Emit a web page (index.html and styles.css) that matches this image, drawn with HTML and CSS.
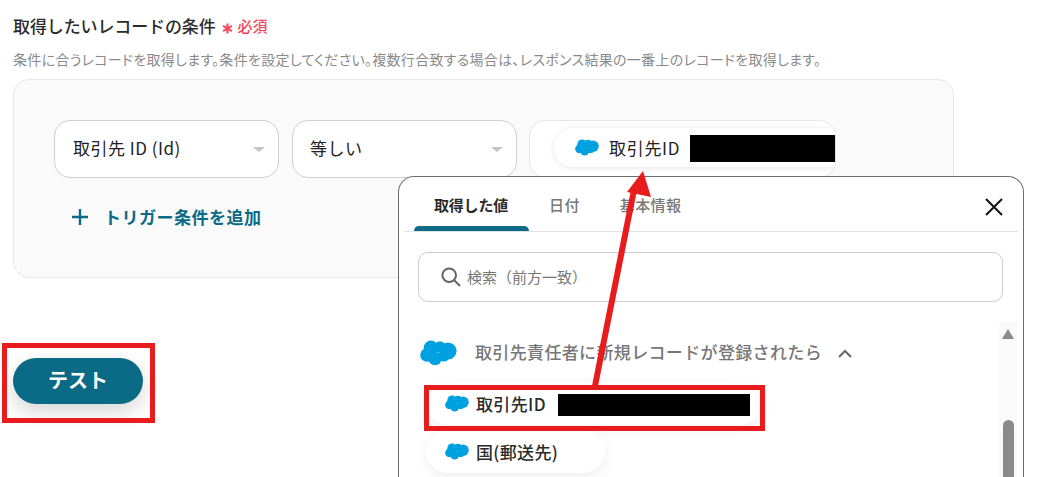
FILE: index.html
```html
<!DOCTYPE html>
<html lang="ja">
<head>
<meta charset="utf-8">
<title>取得したいレコードの条件</title>
<link rel="stylesheet" href="styles.css">
</head>
<body>
<svg class="defs" width="0" height="0" aria-hidden="true">
  <symbol id="cloud" viewBox="0 0 37 26">
    <g fill="#00a1e0">
      <circle cx="11" cy="8" r="7.4"/>
      <circle cx="20" cy="7" r="5.8"/>
      <circle cx="28" cy="11" r="8.6"/>
      <circle cx="7" cy="15" r="6.8"/>
      <circle cx="15" cy="18.5" r="6.8"/>
      <circle cx="24" cy="16" r="5.6"/>
    </g>
  </symbol>
</svg>

<main class="page">
  <h1 class="title">取得したいレコードの条件<span class="required"><svg class="star" viewBox="0 0 12 12"><path d="M6 .5v11M1.200 3.200l9.600 5.600M10.800 3.200l-9.600 5.600" stroke="#f4485f" stroke-width="2.300" fill="none"/></svg>必須</span></h1>
  <p class="desc">条件に合うレコードを取得します。条件を設定してください。複数行合致する場合は、レスポンス結果の一番上のレコードを取得します。</p>

  <section class="panel">
    <div class="row">
      <div class="select"><span class="select-text">取引先 ID (Id)</span><i class="caret"></i></div>
      <div class="select"><span class="select-text">等しい</span><i class="caret"></i></div>
      <div class="value">
        <div class="pill">
          <svg class="cloud-sm"><use href="#cloud"/></svg>
          <span class="pill-text">取引先ID</span>
          <span class="redact redact-a"></span>
        </div>
      </div>
    </div>
    <div class="add">
      <svg class="plus" viewBox="0 0 16 16"><path d="M8 0v16M0 8h16" stroke="#0b6a85" stroke-width="2.400" fill="none"/></svg>
      <span>トリガー条件を追加</span>
    </div>
  </section>

  <button class="test" type="button">テスト</button>
</main>

<aside class="popover">
  <nav class="tabs">
    <span class="tab active">取得した値</span>
    <span class="tab">日付</span>
    <span class="tab">基本情報</span>
    <svg class="close" viewBox="0 0 18 18"><path d="M1 1l16 16M17 1L1 17" stroke="#111" stroke-width="2" fill="none"/></svg>
  </nav>
  <div class="search">
    <svg class="lens" viewBox="0 0 20 20"><circle cx="8.200" cy="8.200" r="6.800" stroke="#666" stroke-width="2" fill="none"/><path d="M13 13l6 6" stroke="#666" stroke-width="2" fill="none"/></svg>
    <span class="search-text">検索（前方一致）</span>
  </div>
  <div class="group">
    <svg class="cloud-lg"><use href="#cloud"/></svg>
    <span class="group-text">取引先責任者に新規レコードが登録されたら</span>
    <svg class="chev" viewBox="0 0 14 9"><path d="M1 8l6-6 6 6" stroke="#666" stroke-width="2" fill="none"/></svg>
  </div>
  <div class="item item-first">
    <svg class="cloud-sm"><use href="#cloud"/></svg>
    <span class="item-text">取引先ID</span>
    <span class="redact redact-b"></span>
  </div>
  <div class="item item-second">
    <svg class="cloud-sm"><use href="#cloud"/></svg>
    <span class="item-text">国(郵送先)</span>
  </div>
  <div class="scrollbar">
    <i class="arrow-up"></i>
    <i class="thumb"></i>
  </div>
</aside>

<svg class="annot" viewBox="0 0 1050 477" aria-hidden="true">
  <path d="M595 386L634 190" stroke="#e81c1c" stroke-width="6" fill="none"/>
  <path d="M643 171L651 197L627 192Z" fill="#e81c1c"/>
  <rect x="426.500" y="387.500" width="336" height="41" fill="none" stroke="#e81c1c" stroke-width="5"/>
  <rect x="4.500" y="345.500" width="148" height="75" fill="none" stroke="#e81c1c" stroke-width="5"/>
</svg>
</body>
</html>
```
FILE: styles.css
```css
* { box-sizing: border-box; }
html, body { margin: 0; height: 477px; overflow: hidden; background: #fff; }
body {
  position: relative;
  width: 1050px;
  font-family: "Noto Sans CJK JP", "Noto Sans", sans-serif;
  color: #222;
}
.defs { position: absolute; }

.page { height: 477px; overflow: hidden; padding: 14px 0 0 13px; }
.title {
  margin: 0;
  font-size: 17px;
  font-weight: 500;
  line-height: 24px;
  letter-spacing: -.12px;
  color: #2b2b2b;
  display: flex;
  align-items: center;
}
.required {
  margin-left: 6px;
  font-size: 15px;
  color: #f4485f;
  letter-spacing: 0;
  display: flex;
  align-items: center;
}
.star { width: 11px; height: 11px; margin: 4px 5px 0 0; }
.desc {
  margin: 11px 0 0;
  font-size: 14px;
  line-height: 20px;
  letter-spacing: .3px;
  color: #8a8a8a;
  white-space: nowrap;
  font-feature-settings: "palt";
}
.panel {
  width: 941px;
  height: 199px;
  margin-top: 10px;
  padding: 40px 0 0 40px;
  background: #fafafa;
  border: 1px solid #e8e8e8;
  border-radius: 16px;
}
.row { display: flex; gap: 13.500px; }
.select {
  width: 224.500px;
  height: 58px;
  padding: 0 18px;
  background: #fff;
  border: 1px solid #cfcfcf;
  border-radius: 16px;
  display: flex;
  align-items: center;
  justify-content: space-between;
  font-size: 17px;
  letter-spacing: .5px;
}
.select-text { margin: -3px 0 0 0; }
.select:nth-child(2) .select-text { margin-left: -1px; }
.caret {
  width: 0; height: 0;
  margin-right: -5px;
  border-left: 6px solid transparent;
  border-right: 6px solid transparent;
  border-top: 5px solid #c4c4c4;
}
.value {
  width: 307px;
  height: 58px;
  margin-left: -1px;
  padding: 7px 1px 0 24px;
  background: #fff;
  border: 1px solid #e6e6e8;
  border-radius: 16px;
  overflow: hidden;
}
.pill {
  height: 39px;
  padding-left: 21px;
  width: 320px;
  display: flex;
  align-items: center;
  background: #fff;
  border-radius: 19px;
  box-shadow: 0 1px 6px rgba(0,0,0,.1);
  white-space: nowrap;
}
.cloud-sm { width: 24px; height: 17px; flex: none; }
.pill-text { margin: -1px 0 0 10px; font-size: 17px; letter-spacing: .7px; }
.redact { background: #000; display: block; flex: none; }
.redact-a { width: 145px; height: 27px; margin: 1px 0 0 10px; }
.add {
  margin: 26px 0 0 18px;
  display: flex;
  align-items: center;
  gap: 16px;
  font-size: 17px;
  font-weight: 700;
  letter-spacing: .5px;
  color: #0b6a85;
}
.plus { width: 16px; height: 16px; }
.test {
  display: block;
  width: 130px;
  height: 46px;
  margin-top: 80px;
  padding: 0 0 4px;
  border: 0;
  border-radius: 23px;
  background: #0b6a85;
  color: #fff;
  font: 700 20px "Noto Sans CJK JP", sans-serif;
  box-shadow: 0 8px 20px rgba(0,0,0,.16);
}

.popover {
  position: absolute;
  left: 398px;
  top: 176px;
  width: 626px;
  height: 301px;
  padding: 0 5px;
  overflow: hidden;
  background: #fff;
  border: 1px solid #6e6e6e;
  border-bottom: 0;
  border-radius: 16px 16px 0 0;
}
.tabs {
  position: relative;
  height: 55px;
  padding-left: 10px;
  display: flex;
  border-bottom: 1px solid #e2e2e2;
  font-size: 15px;
  font-weight: 500;
  letter-spacing: .4px;
  color: #777;
}
.tab { padding: 17px 20px 0; height: 54px; white-space: nowrap; }
.tab.active {
  color: #2b2b2b;
  font-weight: 700;
  letter-spacing: -.2px;
  position: relative;
  width: 115px;
}
.tab.active::after {
  content: "";
  position: absolute;
  left: 0; right: 0; bottom: 0;
  height: 5px;
  background: #0b6a85;
  border-radius: 5px 5px 0 0;
}
.close { position: absolute; right: 15px; top: 21px; width: 18px; height: 18px; }
.search {
  height: 50px;
  width: 585px;
  margin: 20px 0 0 14px;
  padding-left: 22px;
  display: flex;
  align-items: center;
  gap: 6px;
  border: 1px solid #cccccc;
  border-radius: 10px;
  font-size: 15px;
  color: #777;
}
.search-text { margin-top: -2px; }
.lens { width: 20px; height: 20px; }
.group {
  margin: 37px 0 0 16px;
  height: 28px;
  display: flex;
  align-items: center;
  font-size: 17px;
  font-weight: 500;
  letter-spacing: .35px;
  color: #777;
}
.cloud-lg { width: 37px; height: 26px; flex: none; }
.group-text { margin: -3px 0 0 18px; }
.chev { width: 14px; height: 9px; margin-left: 16px; }
.item {
  height: 43px;
  margin-left: 22px;
  padding-left: 19px;
  display: flex;
  align-items: center;
  background: #fff;
  border-radius: 22px;
  box-shadow: 0 4px 14px rgba(0,0,0,.07);
  font-size: 17px;
  font-weight: 500;
  letter-spacing: .35px;
  color: #2b2b2b;
}
.item-first { width: 336px; margin-top: 15px; }
.item-second { width: 179px; margin-top: 5px; }
.item-text { margin: -1px 0 0 7px; }
.redact-b { width: 192px; height: 22px; margin: 3px 0 0 12px; }
.scrollbar {
  position: absolute;
  left: 600px;
  top: 145px;
  width: 19px;
  height: 156px;
  background: #fafafa;
}
.arrow-up {
  position: absolute;
  left: 3px;
  top: 7px;
  width: 0; height: 0;
  border-left: 6.500px solid transparent;
  border-right: 6.500px solid transparent;
  border-bottom: 10px solid #8a8a8a;
}
.thumb {
  position: absolute;
  left: 4px;
  top: 98px;
  width: 11px;
  height: 60px;
  background: #8a8a8a;
  border-radius: 6px 6px 0 0;
}
.annot { position: absolute; left: 0; top: 0; width: 1050px; height: 477px; pointer-events: none; }
```
